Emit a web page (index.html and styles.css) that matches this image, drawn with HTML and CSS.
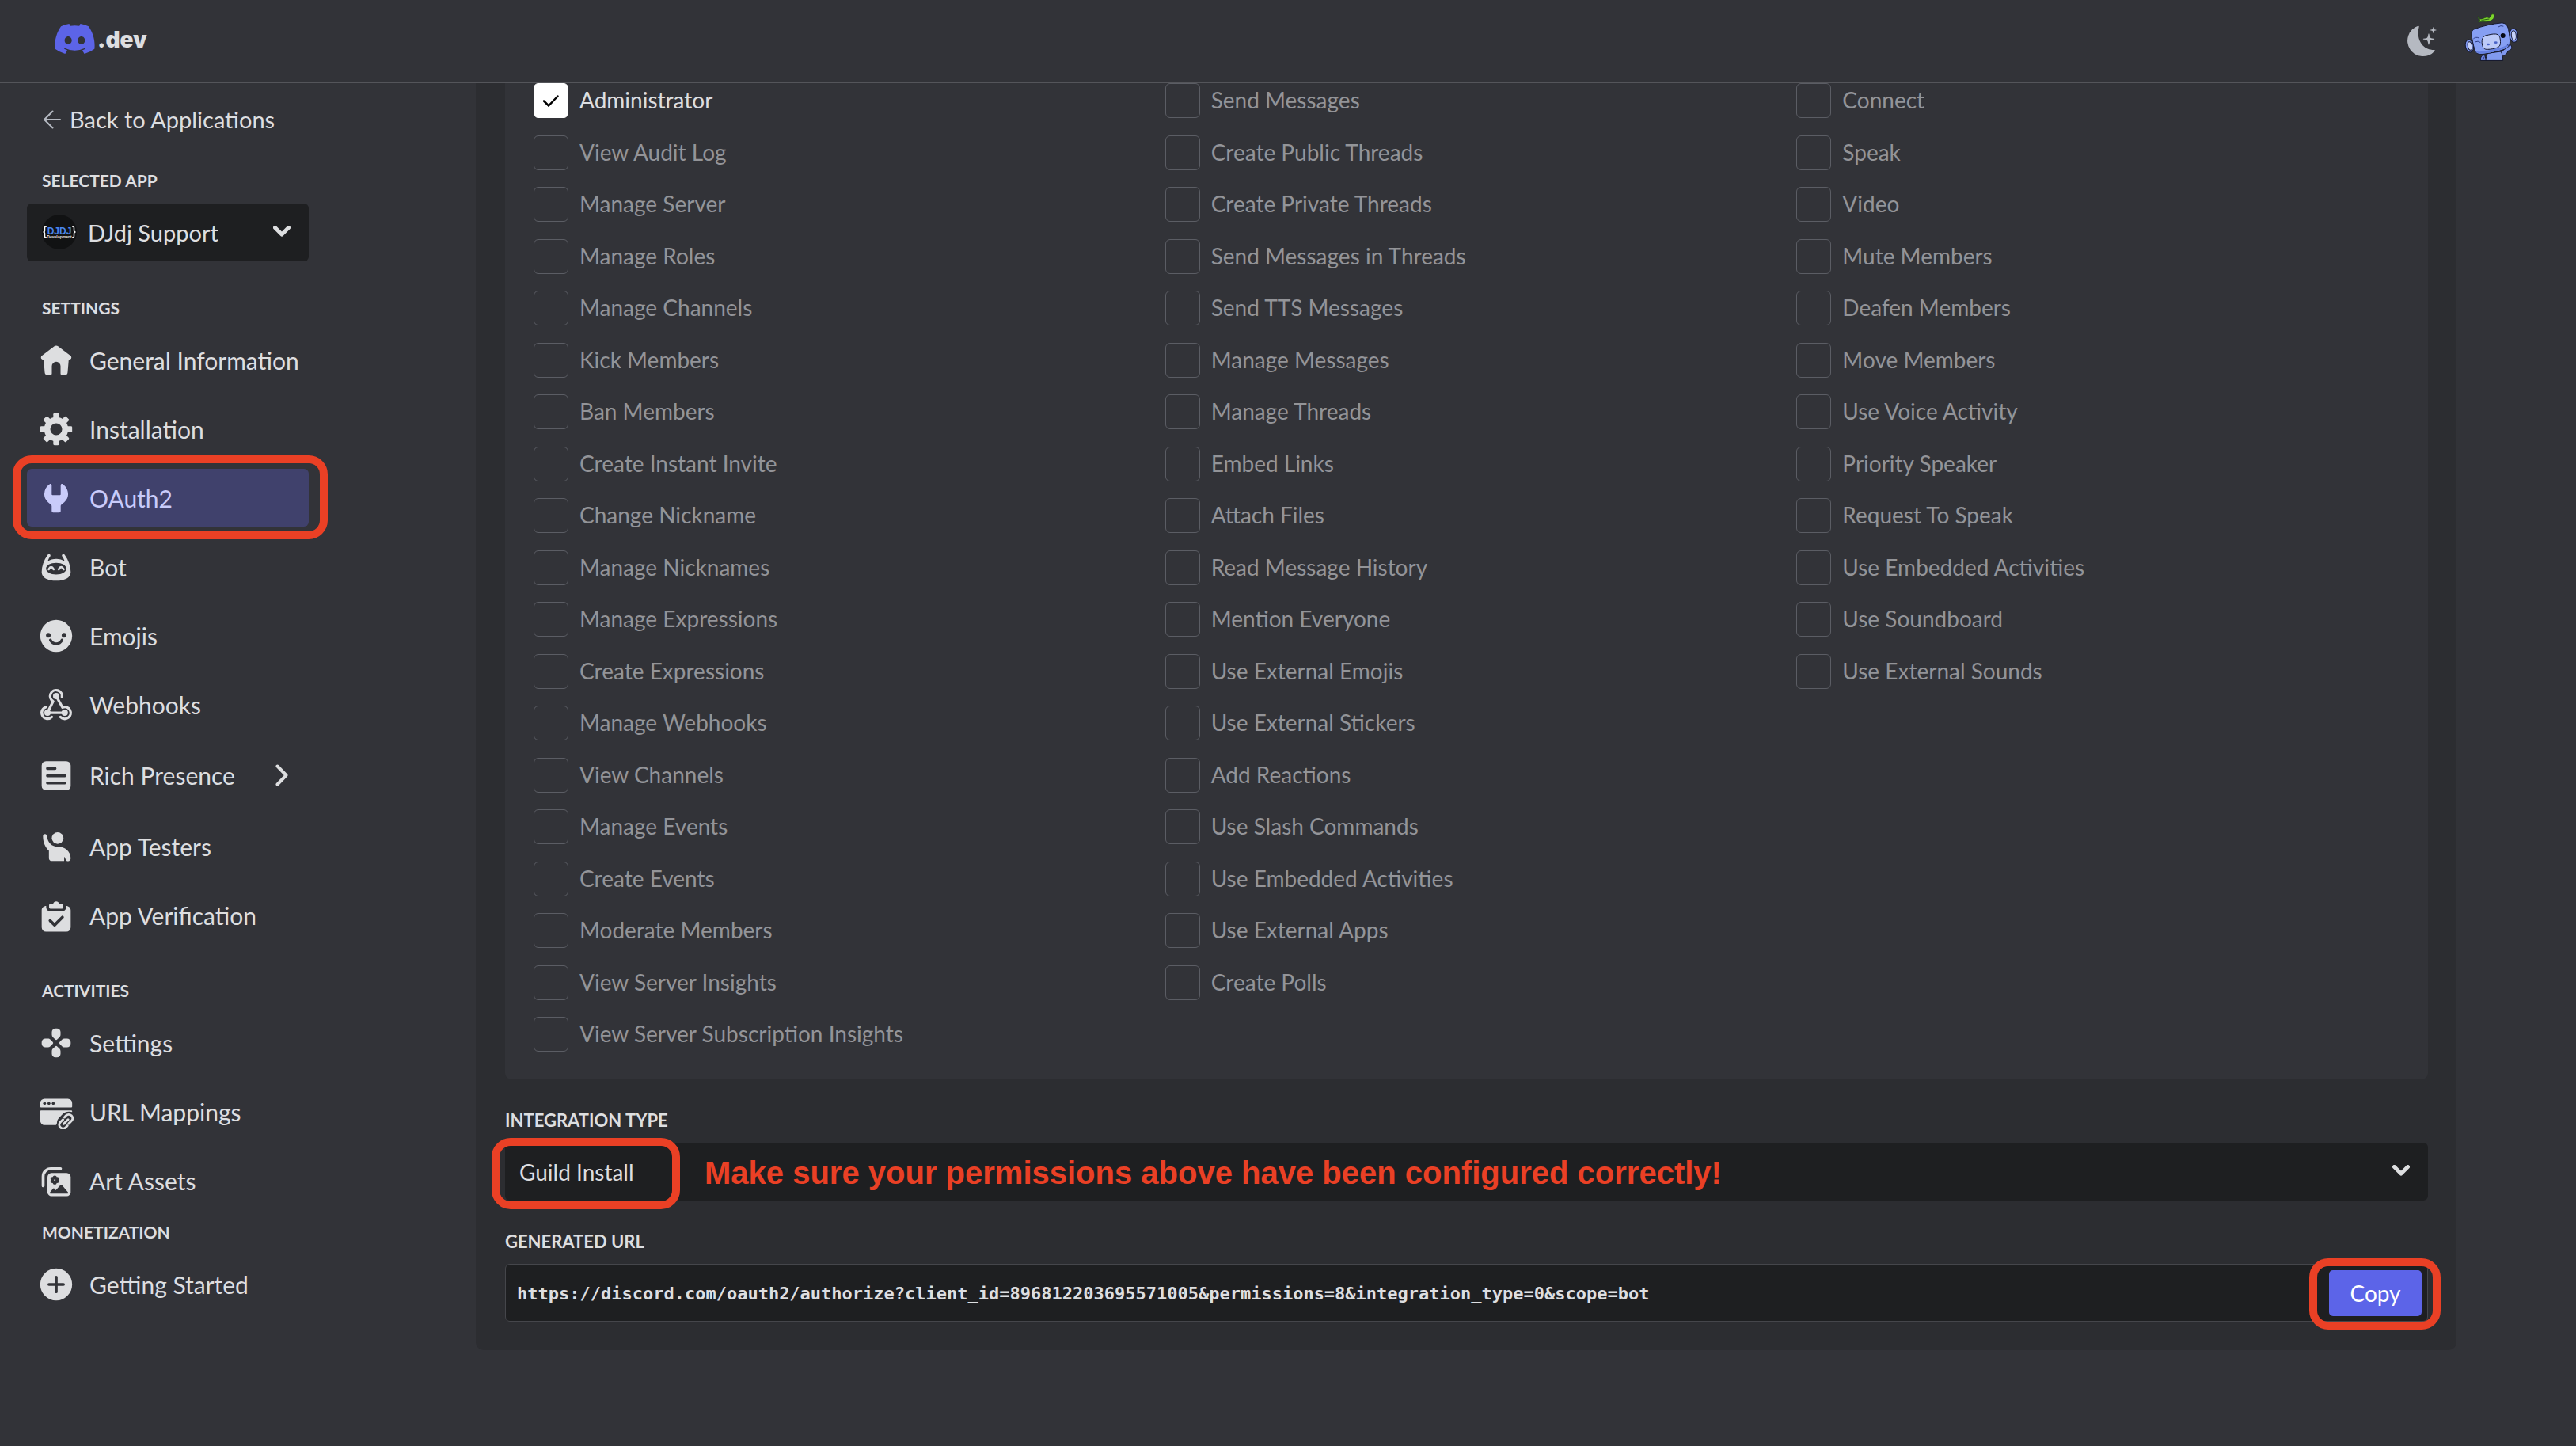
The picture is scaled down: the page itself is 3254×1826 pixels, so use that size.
FILE: index.html
```html
<!DOCTYPE html>
<html lang="en">
<head>
<meta charset="utf-8">
<title>OAuth2 - Developer Portal</title>
<link rel="stylesheet" href="styles.css">
</head>
<body>
<header class="topbar">
  <a class="brand" href="#" aria-label="Developer home">
    <svg class="brand-mark" viewBox="0 0 127.14 96.36" aria-hidden="true"><path fill="currentColor" d="M107.7,8.07A105.15,105.15,0,0,0,81.47,0a72.06,72.06,0,0,0-3.36,6.83A97.68,97.68,0,0,0,49,6.83,72.37,72.37,0,0,0,45.64,0,105.89,105.89,0,0,0,19.39,8.09C2.79,32.65-1.71,56.6.54,80.21h0A105.73,105.73,0,0,0,32.71,96.36,77.7,77.7,0,0,0,39.6,85.25a68.42,68.42,0,0,1-10.85-5.18c.91-.66,1.8-1.34,2.66-2a75.57,75.57,0,0,0,64.32,0c.87.71,1.76,1.39,2.66,2a68.68,68.68,0,0,1-10.87,5.19,77,77,0,0,0,6.89,11.1A105.25,105.25,0,0,0,126.6,80.22h0C129.24,52.84,122.09,29.11,107.7,8.07ZM42.45,65.69C36.18,65.69,31,60,31,53s5-12.74,11.43-12.74S54,46,53.89,53,48.84,65.69,42.45,65.69Zm42.24,0C78.41,65.69,73.25,60,73.25,53s5-12.74,11.44-12.74S96.23,46,96.12,53,91.08,65.69,84.69,65.69Z"/></svg>
    <span class="brand-name">.dev</span>
  </a>
  <div class="topbar-tools">
    <button class="tool" type="button" aria-label="Toggle theme">
      <svg class="moon" viewBox="0 0 48 48" fill="currentColor" aria-hidden="true"><path d="M18.600 4.700c.9-.2 1.300.3 1.100 1.100C15.500 23 25 35 38.500 35c1.200 0 1.600.6 1 1.500A19.700 19.700 0 1 1 18.600 4.700z"/><path d="M32 14.200c.8 0 .8 4 2 5.300s5.200 1 5.200 1.800-4 .7-5.200 1.900-1.200 5.300-2 5.300-.8-4.100-2-5.300-5.200-1.100-5.200-1.900 4-.6 5.200-1.800 1.200-5.300 2-5.300z"/><path d="M37.700 6.200c.5 0 .5 2.300 1.100 2.900s3 .4 3 .9-2.400.4-3 1-.6 2.900-1.100 2.900-.5-2.300-1.100-2.900-3-.5-3-1 2.400-.3 3-.9.600-2.900 1.100-2.900z"/></svg>
    </button>
    <button class="tool" type="button" aria-label="Account">
      <svg class="account" viewBox="60 48 216 216" aria-hidden="true">
        <g stroke="#15182e" stroke-width="3" stroke-linejoin="round" stroke-linecap="round">
          <path fill="#6c83e0" d="M130 228c0-14 5-20 16-19l6 19z"/>
          <path fill="#7f97ee" d="M196 198c18-2 26-10 31-24 4-9 21-9 21 5 0 9-6 13-13 13-4 12-14 20-26 23z"/>
          <path fill="#819aef" d="M150 228c1-10 3-18 7-26l50-7c6 9 8 21 8 33z"/>
          <ellipse fill="#7f97ee" cx="88" cy="174" rx="15" ry="24" transform="rotate(-12 88 174)"/>
          <ellipse fill="#c5d0f8" cx="90" cy="174" rx="8" ry="16" transform="rotate(-12 90 174)"/>
          <ellipse fill="#7f97ee" cx="256" cy="134" rx="16" ry="26" transform="rotate(-6 256 134)"/>
          <ellipse fill="#c5d0f8" cx="256" cy="134" rx="9" ry="18" transform="rotate(-6 256 134)"/>
          <path fill="#869ff3" d="M110 109c26-10 70-20 98-22 18-1 25 10 28 26 4 20 7 38 5 52-2 12-10 18-22 22-22 8-62 17-84 18-18 1-24-5-28-20-5-18-9-36-11-52-1-14 3-20 14-24z"/>
          <path fill="#6580e2" stroke="none" d="M240 160c-2 14-10 21-22 25-22 8-62 17-84 18-12 1-19-3-24-10 18 6 42 0 66-6 26-6 52-8 64-27z"/>
          <path fill="#bccaf8" d="M150 135c14-4 26-7 38-6 11 1 16 10 17 22 2 18-1 26-14 30-10 3-22 6-34 6-12 1-19-6-21-20-2-17 1-28 14-32z"/>
        </g>
        <ellipse fill="#4a63c8" cx="159" cy="168" rx="6" ry="4"/><ellipse fill="#4a63c8" cx="188" cy="161" rx="6" ry="4"/>
        <circle fill="#070a14" cx="215" cy="135" r="9"/>
        <path fill="none" stroke="#2f3e86" stroke-width="3" stroke-linecap="round" d="M104 146c4-4 12-6 18-3M112 158q8-5 17 2M199 101q7-6 17-2M231 166l5 8M144 216l-4 8"/>
        <path fill="#7fd42d" stroke="#1d4a12" stroke-width="2" d="M121 62c3 9 8 12 18 9 9-5 17-7 24-3 4-3 7-8 8-12 3-4 9-3 12 1 0 10-5 18-16 22-9 4-17 3-23 3-8 0-14-1-22 2 2-4 4-7 7-9-6-2-9-7-8-13z"/>
        <path fill="none" stroke="#245a16" stroke-width="3" d="M129 80c10-5 20-6 34-8"/>
      </svg>
    </button>
  </div>
</header>

<div class="layout">
  <aside class="sidebar">
    <a class="back" href="#">
      <svg class="back-arrow" viewBox="0 0 24 24" aria-hidden="true"><path d="M22 12H2M12.500 1.500 2 12l10.500 10.500"/></svg>
      Back to Applications
    </a>

    <label class="heading" for="app">SELECTED APP</label>
    <div class="picker">
      <svg class="picker-logo" viewBox="0 0 44 44" aria-hidden="true"><circle cx="22" cy="22" r="22" fill="#111213"/><text class="logo-main" x="22" y="25">DJDJ</text><text class="logo-sub" x="22" y="30">Development</text><path fill="none" stroke="#fff" stroke-width="1.500" d="M6 15H5q-1.500 0-1.500 2v3q0 2-2 2 2 0 2 2v3q0 2 1.500 2h1M38 15h1q1.500 0 1.500 2v3q0 2 2 2-2 0-2 2v3q0 2-1.500 2h-1"/></svg>
      <select class="control control-app" id="app"><option>DJdj Support</option></select>
      <svg class="caret" viewBox="0 0 22 14" aria-hidden="true"><path d="M2.500 2.500 11 11l8.500-8.500"/></svg>
    </div>

    <nav aria-label="Settings">
      <h2 class="heading">SETTINGS</h2>
      <ul class="menu">
        <li><a class="item" href="#"><svg class="icon" viewBox="0 0 24 24"><path d="M12 1.900c.5 0 .9.100 1.300.400l8.600 6.500c.8.600.8 1.800 0 2.400l-1.300.800-.7 8.300c-.1 1.100-.8 1.900-1.900 1.900H16c-.6 0-1-.4-1-1V16a3 3 0 0 0-6 0v5.200c0 .6-.4 1-1 1H6c-1.100 0-1.800-.8-1.900-1.900L3.400 12l-1.300-.8c-.8-.6-.8-1.800 0-2.400l8.600-6.500c.4-.3.8-.4 1.300-.4z"/></svg>General Information</a></li>
        <li><a class="item" href="#"><svg class="icon" viewBox="0 0 24 24"><circle class="line" cx="12" cy="12" r="6.200" stroke-width="4.200"/><g id="teeth"><rect x="10" y="1" width="4" height="5" rx=".8"/><rect x="10" y="18" width="4" height="5" rx=".8"/><rect x="1" y="10" width="5" height="4" rx=".8"/><rect x="18" y="10" width="5" height="4" rx=".8"/></g><use href="#teeth" transform="rotate(45 12 12)"/></svg>Installation</a></li>
        <li class="marked"><a class="item item-current" href="#" aria-current="page"><svg class="icon" viewBox="0 0 24 24"><path d="M8.900 3.100c0-.7-.7-1.100-1.300-.8A8.600 8.600 0 0 0 3.800 9.300c0 3.100 1.900 5.300 4.300 6.900.5.300.8.800.8 1.300V21a1 1 0 0 0 1 1h4.200a1 1 0 0 0 1-1v-3.500c0-.5.300-1 .8-1.300 2.400-1.600 4.300-3.800 4.300-6.900 0-2.900-1.500-5.500-3.800-7-.6-.3-1.300.100-1.300.800v6.300a.6.600 0 0 1-.6.600h-5a.6.600 0 0 1-.6-.6z"/></svg>OAuth2</a></li>
        <li><a class="item" href="#"><svg class="icon" viewBox="0 0 24 24"><path fill-rule="evenodd" d="M6.100 3.700c.3-.6 1-.7 1.500-.4s.6.900.3 1.400C7.200 5.700 6.500 7 6.200 8.100 7.800 7 9.800 6.400 12 6.400s4.200.6 5.800 1.700c-.3-1.100-1-2.400-1.700-3.400-.3-.5-.2-1.100.3-1.400s1.200-.2 1.500.4C20.600 7.600 22 11.500 22 15.500c0 4-4.500 5.900-10 5.900S2 19.500 2 15.500c0-4 1.400-7.900 4.100-11.800zM12 9.100c-4 0-7 1.700-7 4s3 4.100 7 4.100 7-1.800 7-4.100-3-4-7-4z"/><path class="line" stroke-width="1.500" d="M6.900 13.600q1.600-3 3.300 0M13.800 13.600q1.600-3 3.300 0"/></svg>Bot</a></li>
        <li><a class="item" href="#"><svg class="icon" viewBox="0 0 24 24"><circle cx="12" cy="12" r="11"/><circle class="cut" cx="6.600" cy="11.600" r="1.600"/><circle class="cut" cx="17.400" cy="11.600" r="1.600"/><path class="cut-line" stroke-width="1.900" d="M8 14.900c1.700 3.400 6.300 3.400 8 0"/></svg>Emojis</a></li>
        <li><a class="item" href="#"><svg class="icon" viewBox="0 0 24 24"><path class="line" stroke-width="1.800" d="M16 6.700A4.100 4.100 0 1 0 9.900 9.600L6 17.500M12 6l4.300 7.800a4.100 4.100 0 1 1-1.400 6.600M5.200 13.500A4.100 4.100 0 1 0 9 20.400M6 17.500h11.800"/><circle cx="12" cy="6" r="2.200"/><circle cx="6" cy="17.500" r="2.200"/><circle cx="17.900" cy="17.500" r="2.200"/></svg>Webhooks</a></li>
        <li><a class="item item-group" href="#"><svg class="icon" viewBox="0 0 24 24"><rect x="2" y="2.300" width="20" height="20" rx="3"/><path class="cut-line" stroke-width="2" d="M6 7.300h5.200M6 12.300h12M6 17.300h12"/></svg>Rich Presence<svg class="more" viewBox="0 0 16 28" aria-hidden="true"><path d="M2.500 2.500 13.500 14l-11 11.500"/></svg></a></li>
        <li><a class="item" href="#"><svg class="icon" viewBox="0 0 24 24"><circle cx="13" cy="6.200" r="4"/><path d="M2.900 4.900c0-.9.500-1.500 1.400-1.500.8 0 1.300.6 1.400 1.500.3 3 1.800 5.400 4.200 6.600 1 .5 2.100.7 3.200.7 5 0 8.900 3.300 8.900 7.900 0 1.100-.7 2-1.800 2-.9 0-1.400-.5-1.700-1.300l-.6-1.400c-.100-.3-.4-.2-.4.100V22H9c-1.200 0-2-.9-2-2v-5.100C4.500 12.700 2.900 8.900 2.900 4.900z"/></svg>App Testers</a></li>
        <li><a class="item" href="#"><svg class="icon" viewBox="0 0 24 24"><path d="M12 2.300c1 0 1.700.6 2 1.400.1.300.3.400.6.400h1.400c.5 0 .9.400.9.900v1.400c0 .5-.4.900-.9.900H8c-.5 0-.9-.4-.9-.9V5c0-.5.4-.9.9-.9h1.400c.3 0 .5-.100.600-.4.300-.8 1-1.400 2-1.400z"/><path d="M5.100 5.500v.7C5.100 8 6.400 9.200 8 9.200h8c1.600 0 2.900-1.200 2.900-3v-.7c1.700 0 3.100 1.300 3.100 3v11.700a3 3 0 0 1-3 3H5a3 3 0 0 1-3-3V8.500c0-1.700 1.400-3 3.100-3z"/><path class="cut-line" stroke-width="2" d="m7.800 15.600 3.100 3 5.400-5.400"/></svg>App Verification</a></li>
      </ul>
    </nav>

    <nav aria-label="Activities">
      <h2 class="heading">ACTIVITIES</h2>
      <ul class="menu">
        <li><a class="item" href="#"><svg class="icon" viewBox="0 0 24 24"><path id="pad" d="M9 4.500A2.500 2.500 0 0 1 11.500 2h1A2.500 2.500 0 0 1 15 4.500v1.800c0 .7-.3 1.300-.7 1.700l-1.600 1.600a1 1 0 0 1-1.400 0L9.700 8A2.400 2.400 0 0 1 9 6.300z"/><use href="#pad" transform="rotate(90 12 12)"/><use href="#pad" transform="rotate(180 12 12)"/><use href="#pad" transform="rotate(270 12 12)"/></svg>Settings</a></li>
        <li><a class="item" href="#"><svg class="icon" viewBox="0 0 24 24"><path d="M4 3h16a3 3 0 0 1 3 3v2.400a.6.600 0 0 1-.6.600H1.600a.6.600 0 0 1-.6-.6V6a3 3 0 0 1 3-3zM1.600 11.100h20.800a.6.600 0 0 1 .6.600v.5c-3-.8-5.300.1-7 1.900l-2 2c-1 1.100-1.400 2.200-1.500 3.500 0 .9-.4 1.600-1.200 1.600H4a3 3 0 0 1-3-3v-6.500a.6.600 0 0 1 .6-.6z"/><circle class="cut" cx="4" cy="6.200" r="1"/><circle class="cut" cx="7" cy="6.200" r="1"/><circle class="cut" cx="10" cy="6.200" r="1"/><path class="line" stroke-width="1.600" d="m17.700 15.800 1.100-1.200a2.600 2.600 0 0 1 3.700 3.700l-1.800 1.800M19.700 21.600l-1.100 1.200a2.600 2.600 0 0 1-3.700-3.700l1.800-1.800M17.200 20.300l3-3"/></svg>URL Mappings</a></li>
        <li><a class="item" href="#"><svg class="icon" viewBox="0 0 24 24"><path class="line" stroke-width="2" d="M3 15.500V9a5.300 5.300 0 0 1 5.300-5.300H15"/><rect x="6" y="6.700" width="16" height="16" rx="2.800"/><g class="cut"><circle cx="11" cy="9.800" r="1.400"/><circle cx="11" cy="13.200" r="1.400"/><circle cx="9.400" cy="10.700" r="1.300"/><circle cx="12.600" cy="10.700" r="1.300"/><circle cx="9.400" cy="12.400" r="1.300"/><circle cx="12.600" cy="12.400" r="1.300"/><path d="M8.300 20.900c-.6 0-.8-.6-.5-1l2-2.400c.3-.4.700-.4 1 0l.9 1 3.100-3.400c.4-.4.900-.4 1.300 0l4 4.800c.4.500.1 1-.5 1z"/></g></svg>Art Assets</a></li>
      </ul>
    </nav>

    <nav class="nav-tight" aria-label="Monetization">
      <h2 class="heading">MONETIZATION</h2>
      <ul class="menu">
        <li><a class="item" href="#"><svg class="icon" viewBox="0 0 24 24"><circle cx="12" cy="12" r="11"/><path class="cut-line" stroke-width="2" d="M12 7v10M7 12h10"/></svg>Getting Started</a></li>
      </ul>
    </nav>
  </aside>

  <main class="panel">
    <section class="permissions" aria-label="Bot permissions">
      <div class="column">
        <label class="perm"><input type="checkbox" checked><span>Administrator</span></label>
        <label class="perm"><input type="checkbox"><span>View Audit Log</span></label>
        <label class="perm"><input type="checkbox"><span>Manage Server</span></label>
        <label class="perm"><input type="checkbox"><span>Manage Roles</span></label>
        <label class="perm"><input type="checkbox"><span>Manage Channels</span></label>
        <label class="perm"><input type="checkbox"><span>Kick Members</span></label>
        <label class="perm"><input type="checkbox"><span>Ban Members</span></label>
        <label class="perm"><input type="checkbox"><span>Create Instant Invite</span></label>
        <label class="perm"><input type="checkbox"><span>Change Nickname</span></label>
        <label class="perm"><input type="checkbox"><span>Manage Nicknames</span></label>
        <label class="perm"><input type="checkbox"><span>Manage Expressions</span></label>
        <label class="perm"><input type="checkbox"><span>Create Expressions</span></label>
        <label class="perm"><input type="checkbox"><span>Manage Webhooks</span></label>
        <label class="perm"><input type="checkbox"><span>View Channels</span></label>
        <label class="perm"><input type="checkbox"><span>Manage Events</span></label>
        <label class="perm"><input type="checkbox"><span>Create Events</span></label>
        <label class="perm"><input type="checkbox"><span>Moderate Members</span></label>
        <label class="perm"><input type="checkbox"><span>View Server Insights</span></label>
        <label class="perm"><input type="checkbox"><span>View Server Subscription Insights</span></label>
      </div>
      <div class="column">
        <label class="perm"><input type="checkbox"><span>Send Messages</span></label>
        <label class="perm"><input type="checkbox"><span>Create Public Threads</span></label>
        <label class="perm"><input type="checkbox"><span>Create Private Threads</span></label>
        <label class="perm"><input type="checkbox"><span>Send Messages in Threads</span></label>
        <label class="perm"><input type="checkbox"><span>Send TTS Messages</span></label>
        <label class="perm"><input type="checkbox"><span>Manage Messages</span></label>
        <label class="perm"><input type="checkbox"><span>Manage Threads</span></label>
        <label class="perm"><input type="checkbox"><span>Embed Links</span></label>
        <label class="perm"><input type="checkbox"><span>Attach Files</span></label>
        <label class="perm"><input type="checkbox"><span>Read Message History</span></label>
        <label class="perm"><input type="checkbox"><span>Mention Everyone</span></label>
        <label class="perm"><input type="checkbox"><span>Use External Emojis</span></label>
        <label class="perm"><input type="checkbox"><span>Use External Stickers</span></label>
        <label class="perm"><input type="checkbox"><span>Add Reactions</span></label>
        <label class="perm"><input type="checkbox"><span>Use Slash Commands</span></label>
        <label class="perm"><input type="checkbox"><span>Use Embedded Activities</span></label>
        <label class="perm"><input type="checkbox"><span>Use External Apps</span></label>
        <label class="perm"><input type="checkbox"><span>Create Polls</span></label>
      </div>
      <div class="column">
        <label class="perm"><input type="checkbox"><span>Connect</span></label>
        <label class="perm"><input type="checkbox"><span>Speak</span></label>
        <label class="perm"><input type="checkbox"><span>Video</span></label>
        <label class="perm"><input type="checkbox"><span>Mute Members</span></label>
        <label class="perm"><input type="checkbox"><span>Deafen Members</span></label>
        <label class="perm"><input type="checkbox"><span>Move Members</span></label>
        <label class="perm"><input type="checkbox"><span>Use Voice Activity</span></label>
        <label class="perm"><input type="checkbox"><span>Priority Speaker</span></label>
        <label class="perm"><input type="checkbox"><span>Request To Speak</span></label>
        <label class="perm"><input type="checkbox"><span>Use Embedded Activities</span></label>
        <label class="perm"><input type="checkbox"><span>Use Soundboard</span></label>
        <label class="perm"><input type="checkbox"><span>Use External Sounds</span></label>
      </div>
    </section>

    <label class="field-label" for="integration">INTEGRATION TYPE</label>
    <div class="picker">
      <select class="control" id="integration"><option>Guild Install</option></select>
      <svg class="caret" viewBox="0 0 22 14" aria-hidden="true"><path d="M2.500 2.500 11 11l8.500-8.500"/></svg>
      <span class="ring ring-type"></span>
      <strong class="note">Make sure your permissions above have been configured correctly!</strong>
    </div>

    <label class="field-label" for="url">GENERATED URL</label>
    <div class="url-box">
      <input class="url" id="url" type="text" readonly value="https://discord.com/oauth2/authorize?client_id=896812203695571005&amp;permissions=8&amp;integration_type=0&amp;scope=bot">
      <div class="marked">
        <button class="copy" type="button">Copy</button>
        <span class="ring ring-copy"></span>
      </div>
    </div>
  </main>
</div>
</body>
</html>
```
FILE: styles.css
```css
:root {
  --bg: #323338;
  --panel: #2c2d31;
  --field: #1e1f21;
  --text: #dddee0;
  --muted: #939498;
  --brand: #5c64e8;
  --mark: #ea4025;
}

* { box-sizing: border-box; }

body {
  margin: 0;
  min-height: 100vh;
  background: var(--bg);
  color: var(--text);
  font: 28px/36px Lato, sans-serif;
}

a { color: inherit; text-decoration: none; }

button, input, select { font: inherit; color: inherit; }

/* Top bar */
.topbar {
  display: flex;
  align-items: center;
  justify-content: space-between;
  height: 105px;
  padding: 0 72px 0 69px;
  border-bottom: 1px solid #54555a;
}

.brand {
  display: flex;
  align-items: flex-end;
  gap: 3px;
  padding-bottom: 6px;
}

.brand-mark { width: 51px; height: 38px; color: var(--brand); }

.brand-name { font: 900 28px/36px Inter, sans-serif; }

.topbar-tools { display: flex; align-items: center; gap: 26px; }

.tool { display: flex; padding: 0; border: 0; background: none; color: #b5b9c1; }

.moon { width: 48px; height: 48px; }

.account { width: 72px; height: 72px; }

/* Page columns */
.layout {
  display: grid;
  grid-template-columns: 356px minmax(0, 1fr);
  align-items: start;
  column-gap: 211px;
  padding: 0 151px 0 34px;
}

/* Sidebar */
.back {
  display: flex;
  align-items: center;
  gap: 10px;
  padding: 28px 0 0 20px;
  font-size: 29px;
}

.back-arrow { width: 24px; height: 24px; }

.back-arrow path {
  fill: none;
  stroke: #b5b9c1;
  stroke-width: 2;
  stroke-linecap: round;
  stroke-linejoin: round;
}

.heading {
  display: block;
  margin: 47px 0 17px 19px;
  font-size: 21px;
  line-height: 24px;
  font-weight: 700;
}

.nav-tight .heading { margin-top: 17px; }

.menu {
  display: grid;
  gap: 14px;
  margin: 0;
  padding: 0;
  list-style: none;
}

.item {
  display: flex;
  align-items: center;
  gap: 20px;
  min-height: 73px;
  padding: 0 10px 0 15px;
  border-radius: 6px;
  font-size: 30px;
  white-space: nowrap;
}

.item-group { min-height: 78px; padding-right: 26px; }

.item-current { background: #40416c; color: #c9cbfa; }

.icon { flex: none; width: 44px; height: 44px; fill: currentColor; }

.line { fill: none; stroke: currentColor; stroke-linecap: round; stroke-linejoin: round; }

.cut { fill: var(--bg); }

.cut-line { fill: none; stroke: var(--bg); stroke-linecap: round; stroke-linejoin: round; }

.more { width: 16px; height: 28px; margin-left: auto; }

.more path, .caret path {
  fill: none;
  stroke: currentColor;
  stroke-width: 4;
  stroke-linecap: round;
  stroke-linejoin: round;
}

.caret path { stroke-width: 5; }

/* Drop-downs */
.picker, .marked { position: relative; }

.control {
  display: block;
  width: 100%;
  height: 73px;
  padding: 0 60px 0 18px;
  border: 0;
  border-radius: 6px;
  background: var(--field);
  appearance: none;
}

.control-app { padding-left: 77px; font-size: 29px; }

.caret {
  position: absolute;
  top: 28px;
  right: 23px;
  width: 22px;
  height: 14px;
  pointer-events: none;
}

.picker-logo {
  position: absolute;
  top: 14px;
  left: 19px;
  width: 44px;
  height: 44px;
}

.logo-main { font: 700 12px "Liberation Sans", sans-serif; fill: #4a85ec; text-anchor: middle; }

.logo-sub { font: 700 5px "Liberation Sans", sans-serif; fill: #e8e8e8; text-anchor: middle; }

/* Main panel */
.panel {
  padding: 0 36px 36px 37px;
  border-radius: 0 0 10px 10px;
  background: var(--panel);
}

.permissions {
  display: grid;
  grid-template-columns: repeat(3, minmax(0, 1fr));
  padding: 0 0 13px 36px;
  border-radius: 0 0 8px 8px;
  background: var(--bg);
}

.column {
  display: grid;
  grid-auto-rows: 66px 65px;
  align-content: start;
  align-items: start;
}

.perm {
  display: flex;
  align-items: center;
  gap: 14px;
  color: var(--muted);
}

.perm span { padding-bottom: 2px; }

.perm input {
  width: 44px;
  height: 44px;
  margin: 0;
  border: 1px solid #5b5d64;
  border-radius: 6px;
  appearance: none;
}

.perm input:checked {
  border-color: #fff;
  background: #fff url("data:image/svg+xml,%3Csvg xmlns='http://www.w3.org/2000/svg' viewBox='0 0 42 42'%3E%3Cpath d='M12 21.500l6 6 11.500-12' fill='none' stroke='%23000' stroke-width='2.500' stroke-linecap='round'/%3E%3C/svg%3E") center / 42px no-repeat;
}

.perm input:checked + span { color: var(--text); }

.field-label {
  display: block;
  margin: 40px 0 16px;
  font-size: 22px;
  line-height: 24px;
  font-weight: 700;
}

.url-box {
  display: flex;
  align-items: center;
  height: 73px;
  padding: 0 7px 0 0;
  border: 1px solid #45464b;
  border-radius: 6px;
  background: var(--field);
}

.url {
  flex: 1;
  min-width: 0;
  height: 71px;
  padding: 2px 14px 0;
  border: 0;
  background: none;
  font: 700 22px "DejaVu Sans Mono", monospace;
}

.copy {
  display: block;
  width: 117px;
  height: 58px;
  padding: 0;
  border: 0;
  border-radius: 5px;
  background: var(--brand);
  color: #fff;
}

/* Red call-outs drawn over the page */
.ring {
  position: absolute;
  border: 10px solid var(--mark);
  border-radius: 24px;
  pointer-events: none;
}

.menu .marked::after {
  content: "";
  position: absolute;
  inset: -17px -24px -16px -18px;
  border: 10px solid var(--mark);
  border-radius: 24px;
  pointer-events: none;
}

.ring-type { top: -6px; left: -17px; width: 238px; height: 90px; }

.ring-copy { inset: -15px -24px -17px -25px; }

.note {
  position: absolute;
  top: 15px;
  left: 252px;
  color: var(--mark);
  font: 700 40px/46px "Liberation Sans", sans-serif;
  white-space: nowrap;
}
```
